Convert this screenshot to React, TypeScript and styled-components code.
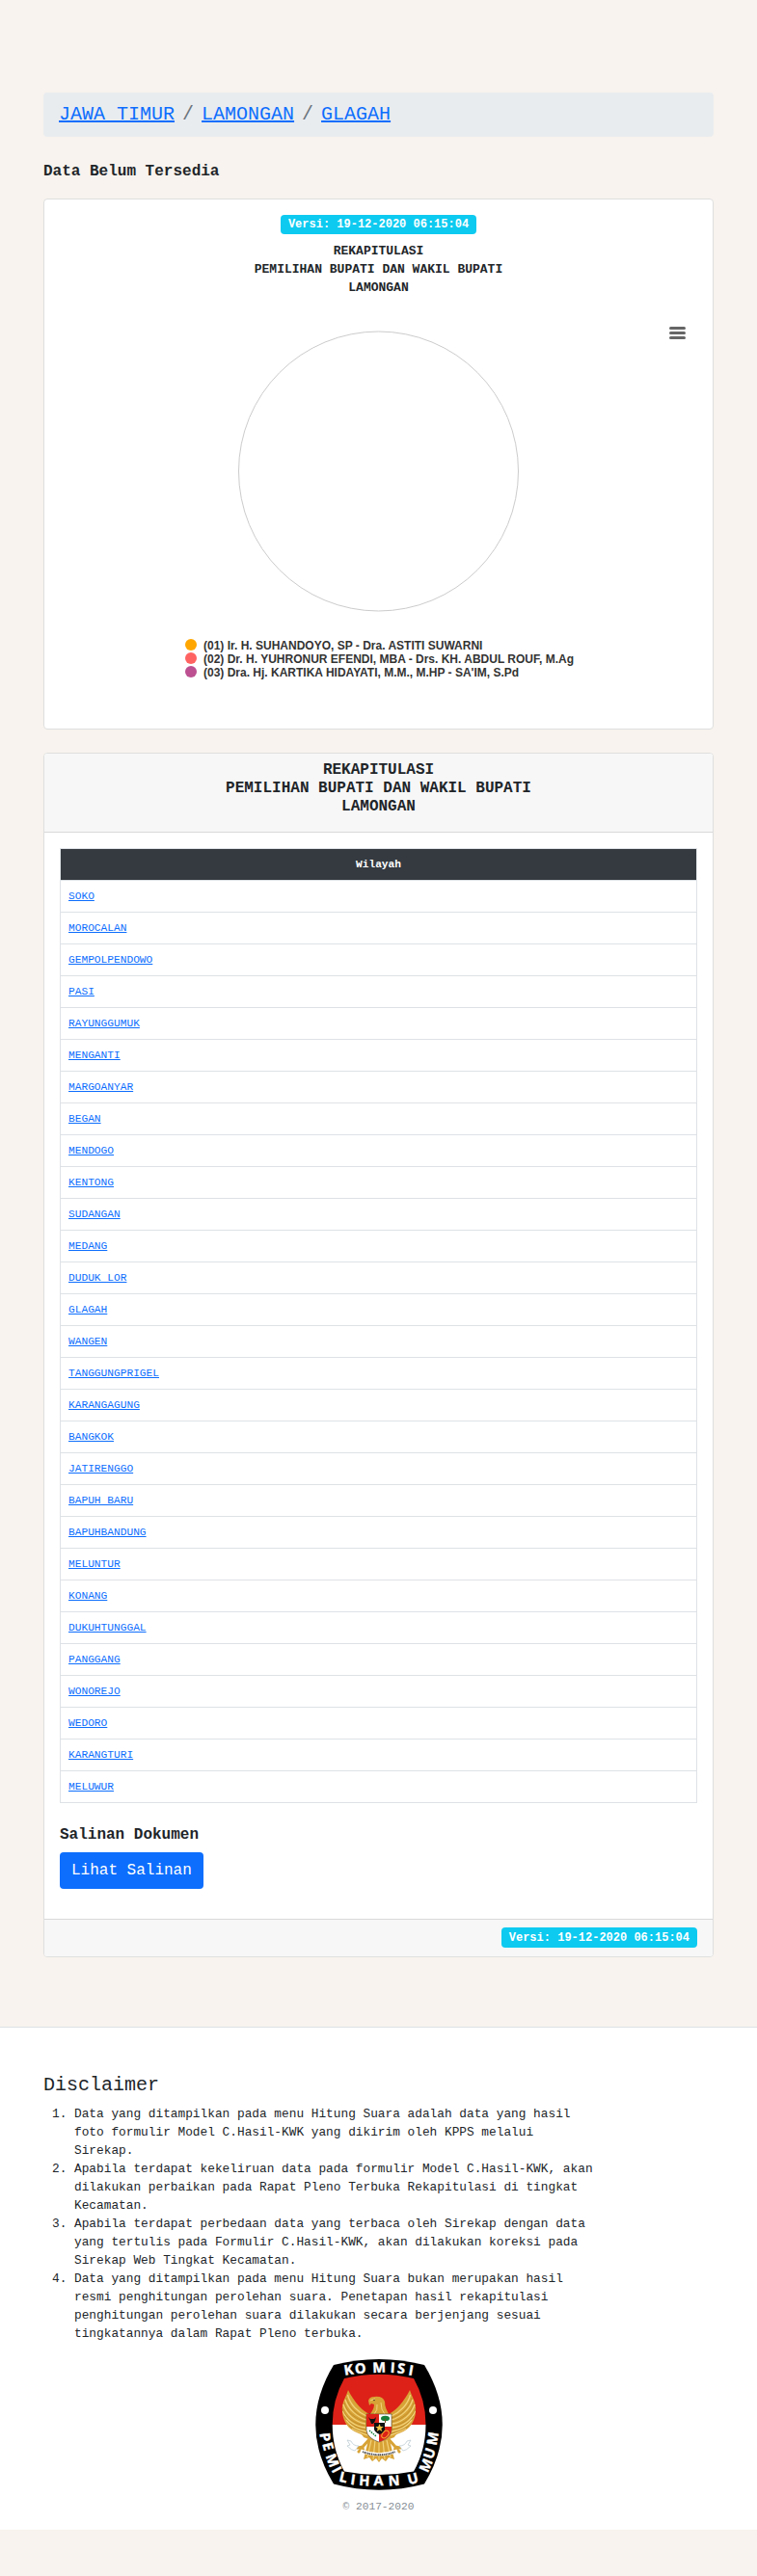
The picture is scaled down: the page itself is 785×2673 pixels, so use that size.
import React from "react";
import styled, { createGlobalStyle } from "styled-components";

const Global = createGlobalStyle`
  *, *::before, *::after { box-sizing: border-box; }
  body {
    margin: 0;
    background: #f8f3ee;
    color: #212529;
    font: 400 16px/24px "Liberation Mono", monospace;
  }
  h5, h6, p, ol, ul { margin: 0; }
  a { color: #0d6efd; text-decoration: underline; }
`;

const Page = styled.div`
  height: 2673px;
  padding-top: 96px;
`;

const Content = styled.main`
  margin: 0 45px;
  height: 2007px;
`;

const Breadcrumb = styled.ol`
  display: flex;
  list-style: none;
  height: 46px;
  padding: 8px 16px;
  border-radius: 4px;
  background: #e9ecef;
  font-size: 20px;
  line-height: 30px;
`;

const Crumb = styled.li`
  & + &::before {
    content: "/";
    padding: 0 8px;
    color: #6c757d;
  }
`;

const Notice = styled.h5`
  margin: 27px 0 18px;
  font-size: 16px;
  line-height: 19px;
`;

const Card = styled.section<{ $height: number }>`
  display: flex;
  flex-direction: column;
  height: ${(p) => p.$height}px;
  margin-bottom: 24px;
  border: 1px solid #dfdfdf;
  border-radius: 4px;
  background: #fff;
  overflow: hidden;
`;

const ChartBody = styled.div`
  display: flex;
  flex-direction: column;
  align-items: center;
  padding-top: 16px;
`;

const Badge = styled.span<{ $height: number }>`
  height: ${(p) => p.$height}px;
  padding: ${(p) => p.$height - 16}px 8px 0;
  border-radius: 4px;
  background: #0dcaf0;
  color: #fff;
  font-size: 12px;
  font-weight: 700;
  line-height: 12px;
`;

const Title = styled.h6<{ $size: number }>`
  font-size: ${(p) => p.$size}px;
  font-weight: 700;
  line-height: 19px;
  text-align: center;
`;

const ChartTitle = styled(Title)`
  margin: 8px 0 9px;
`;

const ChartSvg = styled.svg`
  display: block;
  width: 693px;
  height: 400px;
`;

const CardHeader = styled.header`
  height: 82px;
  padding-top: 8px;
  border-bottom: 1px solid #d9d9d9;
  background: #f7f7f7;
`;

const CardBody = styled.div`
  flex: 1;
  padding: 16px;
`;

const CardFooter = styled.footer`
  display: flex;
  justify-content: flex-end;
  height: 39px;
  padding: 8px 16px;
  border-top: 1px solid #d9d9d9;
  background: #f7f7f7;
`;

const Table = styled.table`
  width: 100%;
  border-collapse: collapse;
  font-size: 11.2px;
  line-height: 16px;
`;

const HeadCell = styled.th`
  height: 33px;
  padding: 0 8px;
  border: 1px solid #dee2e6;
  background: #343a40;
  color: #fff;
`;

const Cell = styled.td`
  height: 33px;
  padding: 0 8px;
  border: 1px solid #dee2e6;
`;

const SectionLabel = styled.h6`
  margin: 24px 0 8px;
  font-size: 16px;
  line-height: 19px;
`;

const Button = styled.button`
  display: block;
  height: 38px;
  padding: 0 12px;
  border: 0;
  border-radius: 4px;
  background: #0d6efd;
  color: #fff;
  font: 400 16px/24px "Liberation Mono", monospace;
`;

const SiteFooter = styled.footer`
  height: 522px;
  padding: 48px 45px 0;
  border-top: 1px solid #dee2e6;
  background: #fff;
`;

const FooterTitle = styled.h5`
  font-size: 20px;
  font-weight: 400;
  line-height: 24px;
`;

const Notes = styled.ol`
  width: 575px;
  margin-top: 8px;
  padding-left: 32px;
  font-size: 12.8px;
  line-height: 19px;
`;

const Brand = styled.div`
  display: flex;
  flex-direction: column;
  align-items: center;
  margin-top: 17px;
`;

const Copyright = styled.small`
  margin-top: 9px;
  color: #868e96;
  font-size: 11.2px;
  line-height: 17px;
`;

const villages = [
  "SOKO", "MOROCALAN", "GEMPOLPENDOWO", "PASI", "RAYUNGGUMUK", "MENGANTI",
  "MARGOANYAR", "BEGAN", "MENDOGO", "KENTONG", "SUDANGAN", "MEDANG",
  "DUDUK LOR", "GLAGAH", "WANGEN", "TANGGUNGPRIGEL", "KARANGAGUNG", "BANGKOK",
  "JATIRENGGO", "BAPUH BARU", "BAPUHBANDUNG", "MELUNTUR", "KONANG",
  "DUKUHTUNGGAL", "PANGGANG", "WONOREJO", "WEDORO", "KARANGTURI", "MELUWUR",
];

const candidates = [
  { color: "#ffa600", name: "(01) Ir. H. SUHANDOYO, SP - Dra. ASTITI SUWARNI" },
  { color: "#ff6361", name: "(02) Dr. H. YUHRONUR EFENDI, MBA - Drs. KH. ABDUL ROUF, M.Ag" },
  { color: "#bc5090", name: "(03) Dra. Hj. KARTIKA HIDAYATI, M.M., M.HP - SA'IM, S.Pd" },
];

const notes = [
  "Data yang ditampilkan pada menu Hitung Suara adalah data yang hasil foto formulir Model C.Hasil-KWK yang dikirim oleh KPPS melalui Sirekap.",
  "Apabila terdapat kekeliruan data pada formulir Model C.Hasil-KWK, akan dilakukan perbaikan pada Rapat Pleno Terbuka Rekapitulasi di tingkat Kecamatan.",
  "Apabila terdapat perbedaan data yang terbaca oleh Sirekap dengan data yang tertulis pada Formulir C.Hasil-KWK, akan dilakukan koreksi pada Sirekap Web Tingkat Kecamatan.",
  "Data yang ditampilkan pada menu Hitung Suara bukan merupakan hasil resmi penghitungan perolehan suara. Penetapan hasil rekapitulasi penghitungan perolehan suara dilakukan secara berjenjang sesuai tingkatannya dalam Rapat Pleno terbuka.",
];

const version = "Versi: 19-12-2020 06:15:04";

const TitleLines = () => (
  <>
    REKAPITULASI
    <br />
    PEMILIHAN BUPATI DAN WAKIL BUPATI
    <br />
    LAMONGAN
  </>
);

const PieChart = () => (
  <ChartSvg viewBox="0 0 693 400">
    <circle cx="346.5" cy="172" r="145" fill="none" stroke="#ccc" />
    <path
      d="M649.500 23.500h14M649.500 28.500h14M649.500 33.500h14"
      stroke="#666"
      strokeWidth="3"
      strokeLinecap="round"
    />
    {candidates.map((c, i) => (
      <g key={c.name}>
        <circle cx="152" cy={352 + i * 14} r="6" fill={c.color} />
        <text
          x="165"
          y={357 + i * 14}
          fill="#333"
          fontFamily="Liberation Sans, sans-serif"
          fontSize="12"
          fontWeight="700"
        >
          {c.name}
        </text>
      </g>
    ))}
  </ChartSvg>
);

const Wing = () => (
  <g>
    <path
      d="M34 32 C32 39 27 45 28 54 C28 62 33 71 39 74 C43 77 49 77 50 81 L58 84 L56 57 C49 54 40 44 34 32 Z"
      fill="#d8a336"
    />
    <path
      d="M33.500 37 C36 47 44 55 53 59 M31 42 C34 52 43 60 53 63 M29 47 C32 57 41 65 52 67 M28.500 54 C32 63 41 70 52 71 M32 63 C37 70 44 74 53 75 M38 72 C43 75 48 76 54 79"
      fill="none"
      stroke="#f2d27a"
      strokeWidth="1.3"
    />
    <path
      d="M32 40 C35 50 43 58 53 61 M30 45 C32 55 42 62 52 65 M28 51 C31 60 40 67 51 69 M30 59 C34 66 42 72 52 73 M35 69 C40 73 47 75 53 77"
      fill="none"
      stroke="#a87820"
      strokeWidth=".5"
    />
    <path
      d="M57 82 L49 91 m0 0 l-5 1 m5 0 l-4 4 m4 -4 l1 4"
      stroke="#d8a336"
      strokeWidth="3"
      strokeLinecap="round"
      fill="none"
    />
    <path
      d="M33 84 l3 5 l-3 1 q5 5 8 5 l4 -5 q-6 0 -8 -5 z"
      fill="#fff"
      stroke="#a9bdc8"
      strokeWidth=".6"
    />
  </g>
);

const Logo = () => (
  <svg width="132" height="136" viewBox="0 0 132 136">
    <path
      d="M19 6 Q66 -6 113 6 Q150.500 68 113 129.500 Q66 142 19 129.500 Q-18.500 68 19 6 Z"
      fill="#000"
    />
    <path d="M30 20 Q66 11.500 102 20 Q114.500 42 114.500 68 H17.700 Q17.700 42 30 20 Z" fill="#dd2118" />
    <path d="M17.700 68 H114.500 Q114.500 94 102 116.500 Q66 123.500 30 116.500 Q17.700 94 17.700 68 Z" fill="#fff" />
    <circle cx="10" cy="53" r="4" fill="#fff" />
    <circle cx="122" cy="53" r="4" fill="#fff" />
    <g
      fill="#fff"
      stroke="#fff"
      strokeWidth=".4"
      fontFamily="Open Sans, sans-serif"
      fontWeight="700"
      fontSize="14.5"
    >
      <text
        x="30.5 41.5 59.5 77.5 84.5 96"
        y="16.8 15.2 14 13.8 14.2 16.2"
        rotate="-9 -6 -2 4 7 10"
      >
        KOMISI
      </text>
      <text
        x="4.5 7.2 10.500 16.5 24 36 45 60.500 76"
        y="77 88 100.500 115 126.5 129.8 130.8 131.3 131.5"
        rotate="83 75 69 62 13 8 4 0 -4"
      >
        PEMILIHAN
      </text>
      <text x="97 116.500 121.5 125.5" y="130.3 118.500 104.500 90" rotate="-14 -66 -72 -80">
        UMUM
      </text>
    </g>
    <Wing />
    <g transform="translate(132 0) scale(-1 1)">
      <Wing />
    </g>
    <path d="M56 80 L50 104 L56 102 L59 106 L63 103 L66 107 L69 103 L73 106 L76 102 L82 104 L76 80 Z" fill="#d8a336" />
    <path
      d="M58 84 L54 102 M62 84 L60 104 M66 84 V105 M70 84 L72 104 M74 84 L78 102"
      stroke="#f2d27a"
      strokeWidth="1.2"
    />
    <path
      d="M55 43 q1 -4 6 -4 q9 -1 11 5 q0 7 5 14 h-21 q5 -6 5 -11 l-3 -1 l-2 2 z"
      fill="#d8a336"
    />
    <path d="M57 43 l5 -2 m2 6 q1 6 -3 10 m7 -12 q0 8 4 12" fill="none" stroke="#f2d27a" />
    <circle cx="61" cy="42.5" r=".7" fill="#222" />
    <path d="M53 57 H79 V74 Q78 82 66 86 Q54 82 53 74 Z" fill="#fff" stroke="#222" strokeWidth=".5" />
    <path d="M53 57 H66 V70 H53 Z M66 70 H79 V74 Q78 82 66 86 Z" fill="#dd2118" />
    <path d="M61 66 H72 V73 Q71 77 66.500 78 Q62 76 61 73 Z" fill="#111" />
    <path d="M66.500 67 l1.200 3 h3 l-2.400 2 l1 3 l-2.800 -1.800 l-2.800 1.800 l1 -3 l-2.400 -2 h3 z" fill="#f4c542" />
    <path d="M55 60 l2 2 l4 0 l2 -2 l-1 4 l-2 3 h-2 l-1 -3 z" fill="#111" />
    <ellipse cx="72.5" cy="61.5" rx="4.5" ry="2.8" fill="#16803a" />
    <path d="M72.500 62 v4" stroke="#7a4b1c" />
    <ellipse cx="72.5" cy="78" rx="4.5" ry="2.8" transform="rotate(-50 72.5 78)" fill="none" stroke="#f4b32f" />
    <path d="M56 74 l7 6" stroke="#16803a" strokeWidth="1.5" strokeDasharray="1.5 1" />
    <path d="M47 95 Q66 102.500 85 95" fill="none" stroke="#fff" strokeWidth="3.2" />
    <path
      d="M49 96 Q66 102.500 83 96"
      fill="none"
      stroke="#444"
      strokeWidth="1.8"
      strokeDasharray="1 .7 1.4 .6"
    />
  </svg>
);

export default function App() {
  return (
    <>
      <Global />
      <Page>
        <Content>
          <Breadcrumb>
            {["JAWA TIMUR", "LAMONGAN", "GLAGAH"].map((name) => (
              <Crumb key={name}>
                <a href="#">{name}</a>
              </Crumb>
            ))}
          </Breadcrumb>
          <Notice>Data Belum Tersedia</Notice>
          <Card $height={551}>
            <ChartBody>
              <Badge $height={20}>{version}</Badge>
              <ChartTitle $size={13}>
                <TitleLines />
              </ChartTitle>
              <PieChart />
            </ChartBody>
          </Card>
          <Card $height={1250}>
            <CardHeader>
              <Title $size={16}>
                <TitleLines />
              </Title>
            </CardHeader>
            <CardBody>
              <Table>
                <thead>
                  <tr>
                    <HeadCell>Wilayah</HeadCell>
                  </tr>
                </thead>
                <tbody>
                  {villages.map((v) => (
                    <tr key={v}>
                      <Cell>
                        <a href="#">{v}</a>
                      </Cell>
                    </tr>
                  ))}
                </tbody>
              </Table>
              <SectionLabel>Salinan Dokumen</SectionLabel>
              <Button>Lihat Salinan</Button>
            </CardBody>
            <CardFooter>
              <Badge $height={21}>{version}</Badge>
            </CardFooter>
          </Card>
        </Content>
        <SiteFooter>
          <FooterTitle>Disclaimer</FooterTitle>
          <Notes>
            {notes.map((n) => (
              <li key={n}>{n}</li>
            ))}
          </Notes>
          <Brand>
            <Logo />
            <Copyright>© 2017-2020</Copyright>
          </Brand>
        </SiteFooter>
      </Page>
    </>
  );
}
